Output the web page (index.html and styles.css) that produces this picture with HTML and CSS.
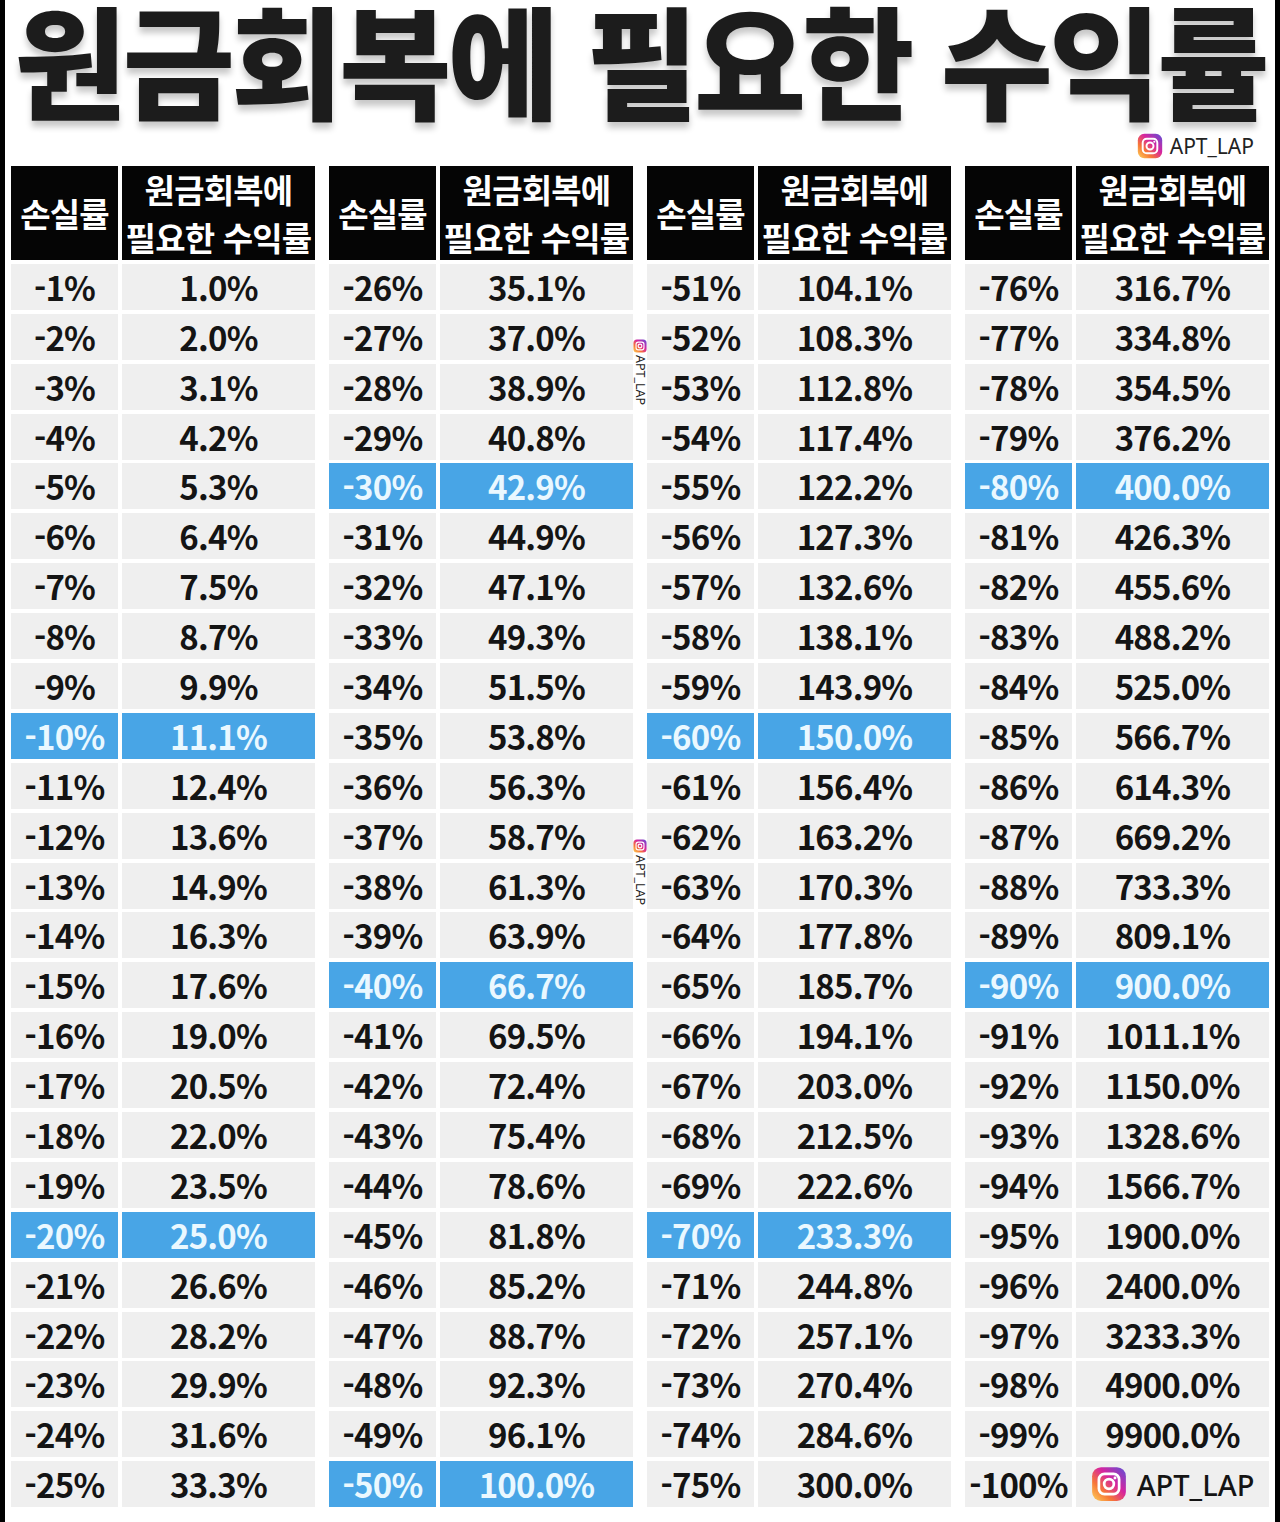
FILE: index.html
```html
<!DOCTYPE html>
<html lang="ko">
<head>
<meta charset="utf-8">
<title>원금회복에 필요한 수익률</title>
<link rel="stylesheet" href="styles.css">
</head>
<body>
<div class="page">
  <h1 class="title">원금회복에 필요한 수익률</h1>
  <div class="handle">
    <svg class="ig ig-sm" viewBox="0 0 32 32" aria-hidden="true">
      <defs>
        <linearGradient id="igA" x1="0" y1="1" x2="1" y2="0">
          <stop offset="0" stop-color="#fdd35b"/>
          <stop offset="0.3" stop-color="#f77737"/>
          <stop offset="0.6" stop-color="#d6249f"/>
          <stop offset="1" stop-color="#5b51d8"/>
        </linearGradient>
      </defs>
      <rect x="1" y="1" width="30" height="30" rx="8" fill="url(#igA)"/>
      <rect x="7" y="7" width="18" height="18" rx="5" fill="none" stroke="#fff" stroke-width="2.4"/>
      <circle cx="16" cy="16" r="4.3" fill="none" stroke="#fff" stroke-width="2.4"/>
      <circle cx="21.3" cy="10.7" r="1.3" fill="#fff"/>
    </svg>
    <span>APT_LAP</span>
  </div>

  <div class="tables">
    <div class="mark mark-1">
      <svg class="ig ig-xs" viewBox="0 0 32 32" aria-hidden="true">
        <defs>
          <linearGradient id="igB" x1="0" y1="1" x2="1" y2="0">
            <stop offset="0" stop-color="#fdd35b"/>
            <stop offset="0.3" stop-color="#f77737"/>
            <stop offset="0.6" stop-color="#d6249f"/>
            <stop offset="1" stop-color="#5b51d8"/>
          </linearGradient>
        </defs>
        <rect x="1" y="1" width="30" height="30" rx="8" fill="url(#igB)"/>
        <rect x="7" y="7" width="18" height="18" rx="5" fill="none" stroke="#fff" stroke-width="2.6"/>
        <circle cx="16" cy="16" r="4.3" fill="none" stroke="#fff" stroke-width="2.6"/>
      </svg>
      <span class="mark-text">APT_LAP</span>
    </div>
    <div class="mark mark-2">
      <svg class="ig ig-xs" viewBox="0 0 32 32" aria-hidden="true">
        <defs>
          <linearGradient id="igC" x1="0" y1="1" x2="1" y2="0">
            <stop offset="0" stop-color="#fdd35b"/>
            <stop offset="0.3" stop-color="#f77737"/>
            <stop offset="0.6" stop-color="#d6249f"/>
            <stop offset="1" stop-color="#5b51d8"/>
          </linearGradient>
        </defs>
        <rect x="1" y="1" width="30" height="30" rx="8" fill="url(#igC)"/>
        <rect x="7" y="7" width="18" height="18" rx="5" fill="none" stroke="#fff" stroke-width="2.6"/>
        <circle cx="16" cy="16" r="4.3" fill="none" stroke="#fff" stroke-width="2.6"/>
      </svg>
      <span class="mark-text">APT_LAP</span>
    </div>

    <div class="table">
      <div class="th">손실률</div>
      <div class="th th-2">원금회복에<br>필요한 수익률</div>
      <div class="td">-1%</div><div class="td">1.0%</div>
      <div class="td">-2%</div><div class="td">2.0%</div>
      <div class="td">-3%</div><div class="td">3.1%</div>
      <div class="td">-4%</div><div class="td">4.2%</div>
      <div class="td">-5%</div><div class="td">5.3%</div>
      <div class="td">-6%</div><div class="td">6.4%</div>
      <div class="td">-7%</div><div class="td">7.5%</div>
      <div class="td">-8%</div><div class="td">8.7%</div>
      <div class="td">-9%</div><div class="td">9.9%</div>
      <div class="td hl">-10%</div><div class="td hl">11.1%</div>
      <div class="td">-11%</div><div class="td">12.4%</div>
      <div class="td">-12%</div><div class="td">13.6%</div>
      <div class="td">-13%</div><div class="td">14.9%</div>
      <div class="td">-14%</div><div class="td">16.3%</div>
      <div class="td">-15%</div><div class="td">17.6%</div>
      <div class="td">-16%</div><div class="td">19.0%</div>
      <div class="td">-17%</div><div class="td">20.5%</div>
      <div class="td">-18%</div><div class="td">22.0%</div>
      <div class="td">-19%</div><div class="td">23.5%</div>
      <div class="td hl">-20%</div><div class="td hl">25.0%</div>
      <div class="td">-21%</div><div class="td">26.6%</div>
      <div class="td">-22%</div><div class="td">28.2%</div>
      <div class="td">-23%</div><div class="td">29.9%</div>
      <div class="td">-24%</div><div class="td">31.6%</div>
      <div class="td">-25%</div><div class="td">33.3%</div>
    </div>

    <div class="table">
      <div class="th">손실률</div>
      <div class="th th-2">원금회복에<br>필요한 수익률</div>
      <div class="td">-26%</div><div class="td">35.1%</div>
      <div class="td">-27%</div><div class="td">37.0%</div>
      <div class="td">-28%</div><div class="td">38.9%</div>
      <div class="td">-29%</div><div class="td">40.8%</div>
      <div class="td hl">-30%</div><div class="td hl">42.9%</div>
      <div class="td">-31%</div><div class="td">44.9%</div>
      <div class="td">-32%</div><div class="td">47.1%</div>
      <div class="td">-33%</div><div class="td">49.3%</div>
      <div class="td">-34%</div><div class="td">51.5%</div>
      <div class="td">-35%</div><div class="td">53.8%</div>
      <div class="td">-36%</div><div class="td">56.3%</div>
      <div class="td">-37%</div><div class="td">58.7%</div>
      <div class="td">-38%</div><div class="td">61.3%</div>
      <div class="td">-39%</div><div class="td">63.9%</div>
      <div class="td hl">-40%</div><div class="td hl">66.7%</div>
      <div class="td">-41%</div><div class="td">69.5%</div>
      <div class="td">-42%</div><div class="td">72.4%</div>
      <div class="td">-43%</div><div class="td">75.4%</div>
      <div class="td">-44%</div><div class="td">78.6%</div>
      <div class="td">-45%</div><div class="td">81.8%</div>
      <div class="td">-46%</div><div class="td">85.2%</div>
      <div class="td">-47%</div><div class="td">88.7%</div>
      <div class="td">-48%</div><div class="td">92.3%</div>
      <div class="td">-49%</div><div class="td">96.1%</div>
      <div class="td hl">-50%</div><div class="td hl">100.0%</div>
    </div>

    <div class="table">
      <div class="th">손실률</div>
      <div class="th th-2">원금회복에<br>필요한 수익률</div>
      <div class="td">-51%</div><div class="td">104.1%</div>
      <div class="td">-52%</div><div class="td">108.3%</div>
      <div class="td">-53%</div><div class="td">112.8%</div>
      <div class="td">-54%</div><div class="td">117.4%</div>
      <div class="td">-55%</div><div class="td">122.2%</div>
      <div class="td">-56%</div><div class="td">127.3%</div>
      <div class="td">-57%</div><div class="td">132.6%</div>
      <div class="td">-58%</div><div class="td">138.1%</div>
      <div class="td">-59%</div><div class="td">143.9%</div>
      <div class="td hl">-60%</div><div class="td hl">150.0%</div>
      <div class="td">-61%</div><div class="td">156.4%</div>
      <div class="td">-62%</div><div class="td">163.2%</div>
      <div class="td">-63%</div><div class="td">170.3%</div>
      <div class="td">-64%</div><div class="td">177.8%</div>
      <div class="td">-65%</div><div class="td">185.7%</div>
      <div class="td">-66%</div><div class="td">194.1%</div>
      <div class="td">-67%</div><div class="td">203.0%</div>
      <div class="td">-68%</div><div class="td">212.5%</div>
      <div class="td">-69%</div><div class="td">222.6%</div>
      <div class="td hl">-70%</div><div class="td hl">233.3%</div>
      <div class="td">-71%</div><div class="td">244.8%</div>
      <div class="td">-72%</div><div class="td">257.1%</div>
      <div class="td">-73%</div><div class="td">270.4%</div>
      <div class="td">-74%</div><div class="td">284.6%</div>
      <div class="td">-75%</div><div class="td">300.0%</div>
    </div>

    <div class="table">
      <div class="th">손실률</div>
      <div class="th th-2">원금회복에<br>필요한 수익률</div>
      <div class="td">-76%</div><div class="td">316.7%</div>
      <div class="td">-77%</div><div class="td">334.8%</div>
      <div class="td">-78%</div><div class="td">354.5%</div>
      <div class="td">-79%</div><div class="td">376.2%</div>
      <div class="td hl">-80%</div><div class="td hl">400.0%</div>
      <div class="td">-81%</div><div class="td">426.3%</div>
      <div class="td">-82%</div><div class="td">455.6%</div>
      <div class="td">-83%</div><div class="td">488.2%</div>
      <div class="td">-84%</div><div class="td">525.0%</div>
      <div class="td">-85%</div><div class="td">566.7%</div>
      <div class="td">-86%</div><div class="td">614.3%</div>
      <div class="td">-87%</div><div class="td">669.2%</div>
      <div class="td">-88%</div><div class="td">733.3%</div>
      <div class="td">-89%</div><div class="td">809.1%</div>
      <div class="td hl">-90%</div><div class="td hl">900.0%</div>
      <div class="td">-91%</div><div class="td">1011.1%</div>
      <div class="td">-92%</div><div class="td">1150.0%</div>
      <div class="td">-93%</div><div class="td">1328.6%</div>
      <div class="td">-94%</div><div class="td">1566.7%</div>
      <div class="td">-95%</div><div class="td">1900.0%</div>
      <div class="td">-96%</div><div class="td">2400.0%</div>
      <div class="td">-97%</div><div class="td">3233.3%</div>
      <div class="td">-98%</div><div class="td">4900.0%</div>
      <div class="td">-99%</div><div class="td">9900.0%</div>
      <div class="td">-100%</div>
      <div class="td td-brand">
        <svg class="ig ig-md" viewBox="0 0 32 32" aria-hidden="true">
          <defs>
            <linearGradient id="igD" x1="0" y1="1" x2="1" y2="0">
              <stop offset="0" stop-color="#fdd35b"/>
              <stop offset="0.3" stop-color="#f77737"/>
              <stop offset="0.6" stop-color="#d6249f"/>
              <stop offset="1" stop-color="#5b51d8"/>
            </linearGradient>
          </defs>
          <rect x="1" y="1" width="30" height="30" rx="8" fill="url(#igD)"/>
          <rect x="7" y="7" width="18" height="18" rx="5" fill="none" stroke="#fff" stroke-width="2.4"/>
          <circle cx="16" cy="16" r="4.3" fill="none" stroke="#fff" stroke-width="2.4"/>
          <circle cx="21.3" cy="10.7" r="1.3" fill="#fff"/>
        </svg>
        <span>APT_LAP</span>
      </div>
    </div>
  </div>
</div>
</body>
</html>
```

FILE: styles.css
```css
* { box-sizing: border-box; }

html, body {
  margin: 0;
  padding: 0;
  background: #fff;
}

body {
  font-family: "Noto Sans CJK KR", "Noto Sans", sans-serif;
  color: #111;
}

.page {
  width: 1280px;
  min-height: 1522px;
  border-left: 5px solid #000;
  border-right: 5px solid #000;
  background: #fff;
}

.title {
  margin: 0;
  height: 130px;
  font-size: 122px;
  font-weight: 900;
  line-height: 114px;
  letter-spacing: -4px;
  text-align: center;
  color: #1c1c1c;
  white-space: nowrap;
  text-shadow: 0 6px 6px rgba(0, 0, 0, 0.22);
}

.handle {
  height: 32px;
  display: flex;
  align-items: center;
  justify-content: flex-end;
  gap: 7px;
  padding-right: 21px;
  font-family: "Noto Sans", sans-serif;
  font-size: 21px;
  color: #222;
  margin-bottom: 4px;
}

.ig { display: block; flex: none; }
.ig-sm { width: 26px; height: 26px; }
.ig-xs { width: 14px; height: 14px; }
.ig-md { width: 36px; height: 36px; }

.tables {
  position: relative;
  display: flex;
  gap: 14px;
  padding-left: 6px;
}

.table {
  display: grid;
  grid-template-columns: 107px 193px;
  grid-template-rows: 94px;
  grid-auto-rows: 46px;
  column-gap: 4px;
  row-gap: 3.9px;
}

.th {
  background: #050505;
  color: #fff;
  font-size: 33px;
  font-weight: 700;
  line-height: 48px;
  display: flex;
  align-items: center;
  justify-content: center;
  text-align: center;
  white-space: nowrap;
  letter-spacing: -0.8px;
}

.td {
  background: #efefef;
  display: flex;
  align-items: center;
  justify-content: center;
  font-size: 33px;
  font-weight: 700;
  color: #141414;
  letter-spacing: -0.8px;
  white-space: nowrap;
}

.td.hl {
  background: #48a5e6;
  color: #eaf8ff;
  font-weight: 700;
}

.td-brand {
  gap: 10px;
  font-family: "Noto Sans", sans-serif;
  font-size: 29px;
  font-weight: 500;
  letter-spacing: 0;
}

.mark {
  position: absolute;
  left: 628px;
  width: 14px;
  display: flex;
  flex-direction: column;
  align-items: center;
  gap: 2px;
}
.mark-1 { top: 173px; }
.mark-2 { top: 673px; }

.mark-text {
  writing-mode: vertical-rl;
  font-family: "Noto Sans", sans-serif;
  font-size: 12.5px;
  line-height: 13px;
  color: #222;
}
```
